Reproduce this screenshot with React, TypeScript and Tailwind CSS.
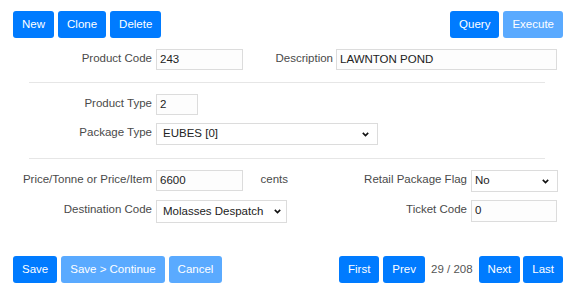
import React from "react";

const btn =
  "h-[27px] px-[9px] rounded-[3px] text-white flex items-center justify-center leading-none";
const primary = `${btn} bg-[#007bff]`;
const disabled = `${btn} bg-[#5aaaff]`;
const label = "text-[#4a4a4a] text-right leading-[14px] pt-[1.5px] whitespace-nowrap";
const input =
  "h-[21px] border border-[#dcdcdc] bg-[#fdfdfd] pl-[3px] text-[#222] flex items-center whitespace-nowrap";

function Chevron() {
  return (
    <svg width="7" height="5" viewBox="0 0 7 5" className="shrink-0">
      <path d="M0.8 0.9 L3.5 3.6 L6.2 0.9" fill="none" stroke="#111" strokeWidth="1.6" />
    </svg>
  );
}

function Select({ w, h, text, pl, pr }: { w: string; h: string; text: string; pl: string; pr: string }) {
  return (
    <div
      className={`${w} ${h} ${pl} ${pr} border border-[#dcdcdc] bg-white text-[#222] flex items-center justify-between whitespace-nowrap`}
    >
      <span>{text}</span>
      <Chevron />
    </div>
  );
}

export default function App() {
  return (
    <div className="w-[575px] h-[299px] bg-white font-['Liberation_Sans',Arial,sans-serif] text-[11.5px] overflow-hidden">
      {/* top toolbar */}
      <div className="flex justify-between pl-[13px] pr-[12px] pt-[11px]">
        <div className="flex gap-[4px]">
          <div className={primary}>New</div>
          <div className={primary}>Clone</div>
          <div className={primary}>Delete</div>
        </div>
        <div className="flex gap-[4px]">
          <div className={primary}>Query</div>
          <div className={disabled}>Execute</div>
        </div>
      </div>

      {/* row 1 */}
      <div className="flex items-start mt-[11px]">
        <div className={`${label} w-[152px]`}>Product Code</div>
        <div className={`${input} ml-[4px] w-[87px]`}>243</div>
        <div className={`${label} w-[90px]`}>Description</div>
        <div className={`${input} ml-[3px] w-[221px]`}>LAWNTON POND</div>
      </div>

      <div className="ml-[29px] w-[516px] h-px bg-[#e6e6e6] mt-[12px]" />

      {/* row 2 */}
      <div className="flex items-start mt-[11px]">
        <div className={`${label} w-[152px]`}>Product Type</div>
        <div className={`${input} ml-[4px] w-[42px]`}>2</div>
      </div>

      {/* row 3 */}
      <div className="flex items-start mt-[8px]">
        <div className={`${label} w-[152px]`}>Package Type</div>
        <div className="ml-[4px]">
          <Select w="w-[222px]" h="h-[22px]" text="EUBES [0]" pl="pl-[6px]" pr="pr-[8px]" />
        </div>
      </div>

      <div className="ml-[29px] w-[516px] h-px bg-[#e6e6e6] mt-[13px]" />

      {/* row 4 */}
      <div className="flex items-start mt-[11px]">
        <div className={`${label} w-[152px]`}>Price/Tonne or Price/Item</div>
        <div className={`${input} ml-[4px] w-[87px]`}>6600</div>
        <div className={`${label} w-[45px]`}>cents</div>
        <div className={`${label} w-[179px]`}>Retail Package Flag</div>
        <div className="ml-[4px]">
          <Select w="w-[87px]" h="h-[22px]" text="No" pl="pl-[3px]" pr="pr-[8px]" />
        </div>
      </div>

      {/* row 5 */}
      <div className="flex items-start mt-[8px]">
        <div className={`${label} w-[152px]`}>Destination Code</div>
        <div className="ml-[4px]">
          <Select w="w-[131px]" h="h-[23px]" text="Molasses Despatch" pl="pl-[6px]" pr="pr-[5px]" />
        </div>
        <div className={`${label} w-[180px]`}>Ticket Code</div>
        <div className={`${input} ml-[4px] w-[86px] h-[22px]`}>0</div>
      </div>

      {/* bottom bar */}
      <div className="flex justify-between items-center pl-[13px] pr-[12px] mt-[33px]">
        <div className="flex gap-[4px]">
          <div className={primary}>Save</div>
          <div className={disabled}>Save &gt; Continue</div>
          <div className={disabled}>Cancel</div>
        </div>
        <div className="flex items-center">
          <div className={primary}>First</div>
          <div className={`${primary} ml-[4px]`}>Prev</div>
          <span className="text-[#555] ml-[6px] mr-[6px]">29 / 208</span>
          <div className={primary}>Next</div>
          <div className={`${primary} ml-[3px]`}>Last</div>
        </div>
      </div>
    </div>
  );
}
